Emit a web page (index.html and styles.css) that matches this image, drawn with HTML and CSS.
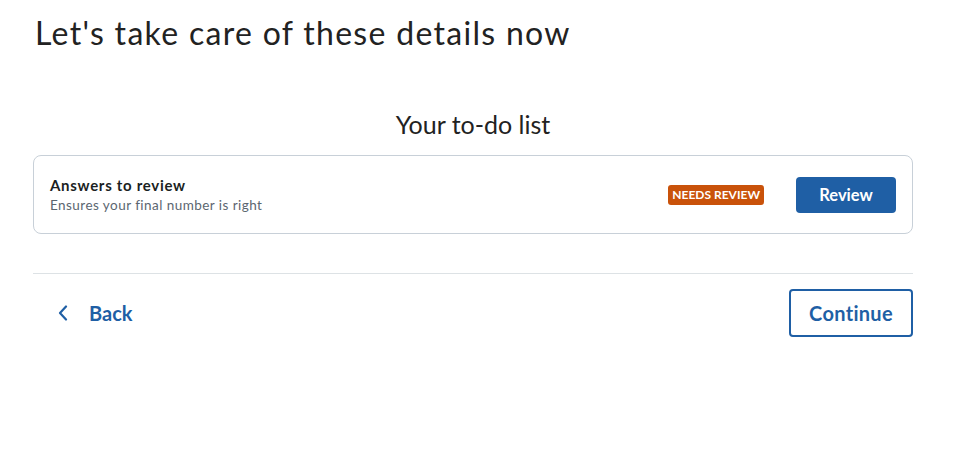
FILE: index.html
```html
<!DOCTYPE html>
<html lang="en">
<head>
<meta charset="utf-8">
<title>To-do list</title>
<link rel="stylesheet" href="styles.css">
</head>
<body>
<main class="page">
  <h1 class="title">Let's take care of these details now</h1>
  <h2 class="subtitle">Your to-do list</h2>
  <section class="card">
    <div class="card-text">
      <div class="card-title">Answers to review</div>
      <div class="card-desc">Ensures your final number is right</div>
    </div>
    <span class="badge">NEEDS REVIEW</span>
    <button class="btn-review">Review</button>
  </section>
  <hr class="divider">
  <nav class="footer">
    <a class="back" href="#">
      <svg class="chev" width="12" height="16" viewBox="0 0 12 16"><path d="M9 1.5 L3 8 L9 14.5" fill="none" stroke="#1f5fa5" stroke-width="2.2" stroke-linecap="round" stroke-linejoin="round"/></svg>
      <span>Back</span>
    </a>
    <button class="btn-continue">Continue</button>
  </nav>
</main>
</body>
</html>
```
FILE: styles.css
```css
* { box-sizing: border-box; }
body {
  margin: 0;
  background: #fff;
  font-family: Lato, "Open Sans", "Liberation Sans", sans-serif;
  color: #1b1f23;
}
.page {
  width: 880px;
  margin-left: 33px;
  padding-top: 13px;
}
.title {
  margin: 0 0 0 2px;
  font-size: 32px;
  font-weight: 400;
  line-height: 40px;
  color: #222;
  letter-spacing: 1.3px;
}
.subtitle {
  margin: 56px 0 0;
  text-align: center;
  font-size: 25px;
  font-weight: 400;
  line-height: 30px;
  color: #222;
}
.card {
  margin-top: 16px;
  height: 79px;
  border: 1px solid #c8d0d8;
  border-radius: 8px;
  display: flex;
  align-items: center;
  padding: 0 16px 0 16px;
}
.card-text { flex: 1; }
.card-title {
  font-size: 15px;
  font-weight: 700;
  line-height: 18px;
  color: #1b1f23;
  letter-spacing: 0.7px;
}
.card-desc {
  margin-top: 3px;
  font-size: 13.5px;
  line-height: 17px;
  color: #5b6670;
  letter-spacing: 0.45px;
}
.badge {
  background: #c9520a;
  color: #fff;
  font-size: 12px;
  font-weight: 700;
  line-height: 20px;
  padding: 0 4px;
  border-radius: 3px;
  margin-right: 32px;
}
.btn-review {
  width: 100px;
  height: 36px;
  border: none;
  border-radius: 4px;
  background: #1f5fa5;
  color: #fff;
  font-family: inherit;
  font-size: 16.5px;
  font-weight: 700;
}
.divider {
  margin: 39px 0 0;
  border: none;
  border-top: 1px solid #dde2e5;
}
.footer {
  margin-top: 15px;
  display: flex;
  justify-content: space-between;
  align-items: center;
}
.back {
  display: flex;
  align-items: center;
  gap: 20px;
  margin-left: 24px;
  color: #1f5fa5;
  text-decoration: none;
  font-size: 20px;
  font-weight: 700;
}
.btn-continue {
  width: 124px;
  height: 48px;
  border: 2px solid #1f5fa5;
  border-radius: 4px;
  background: #fff;
  color: #1f5fa5;
  font-family: inherit;
  font-size: 20px;
  font-weight: 700;
  letter-spacing: 0.3px;
}
```
